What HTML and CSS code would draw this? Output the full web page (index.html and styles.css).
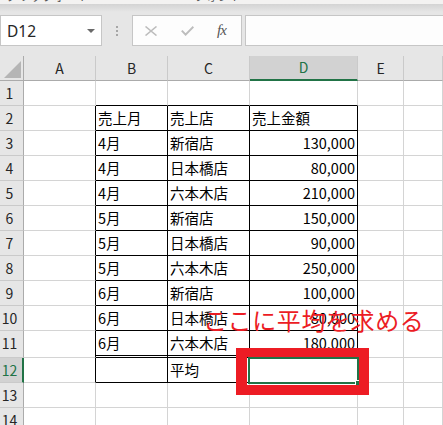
FILE: index.html
```html
<!DOCTYPE html>
<html lang="ja">
<head>
<meta charset="utf-8">
<title>Excel</title>
<link rel="stylesheet" href="styles.css">
</head>
<body>
<div class="screen">
  <div class="ribbon"><span class="rl rl1">クリップボード</span><span class="rl rl2">フォント</span></div>
  <div class="fbar">
    <div class="namebox"><span class="nb-text">D12</span><span class="nb-arrow"></span></div>
    <div class="grip"><i></i><i></i><i></i></div>
    <div class="fbtns">
      <svg class="ic-x" width="12" height="10" viewBox="0 0 12 10"><path d="M0.5 0.5 L11.5 9.5 M11.5 0.5 L0.5 9.5" stroke="#bdbdbd" stroke-width="1.6" fill="none"/></svg>
      <svg class="ic-ok" width="13" height="10" viewBox="0 0 13 10"><path d="M0.8 4.6 L4.6 8.6 L12.4 0.8" stroke="#bdbdbd" stroke-width="2" fill="none"/></svg>
      <span class="fx">fx</span>
    </div>
    <div class="finput"></div>
  </div>
  <div class="sheet">
    <div class="corner"><svg width="17" height="17" viewBox="0 0 17 17"><polygon points="17,0 17,17 0,17" fill="#b5b5b5"/></svg></div>
    <div class="h">A</div><div class="h">B</div><div class="h">C</div><div class="h sel">D</div><div class="h">E</div><div class="h"></div>

    <div class="rh">1</div><div class="c"></div><div class="c bb"></div><div class="c bb"></div><div class="c bb"></div><div class="c"></div><div class="c"></div>

    <div class="rh">2</div><div class="c br"></div><div class="c t">売上月</div><div class="c t">売上店</div><div class="c t">売上金額</div><div class="c"></div><div class="c"></div>

    <div class="rh">3</div><div class="c br"></div><div class="c t">4月</div><div class="c t">新宿店</div><div class="c t num">130,000</div><div class="c"></div><div class="c"></div>

    <div class="rh">4</div><div class="c br"></div><div class="c t">4月</div><div class="c t">日本橋店</div><div class="c t num">80,000</div><div class="c"></div><div class="c"></div>

    <div class="rh">5</div><div class="c br"></div><div class="c t">4月</div><div class="c t">六本木店</div><div class="c t num">210,000</div><div class="c"></div><div class="c"></div>

    <div class="rh">6</div><div class="c br"></div><div class="c t">5月</div><div class="c t">新宿店</div><div class="c t num">150,000</div><div class="c"></div><div class="c"></div>

    <div class="rh">7</div><div class="c br"></div><div class="c t">5月</div><div class="c t">日本橋店</div><div class="c t num">90,000</div><div class="c"></div><div class="c"></div>

    <div class="rh">8</div><div class="c br"></div><div class="c t">5月</div><div class="c t">六本木店</div><div class="c t num">250,000</div><div class="c"></div><div class="c"></div>

    <div class="rh">9</div><div class="c br"></div><div class="c t">6月</div><div class="c t">新宿店</div><div class="c t num">100,000</div><div class="c"></div><div class="c"></div>

    <div class="rh">10</div><div class="c br"></div><div class="c t">6月</div><div class="c t">日本橋店</div><div class="c t num">80,000</div><div class="c"></div><div class="c"></div>

    <div class="rh">11</div><div class="c br"></div><div class="c t dbl">6月</div><div class="c t dbl">六本木店</div><div class="c t dbl num">180,000</div><div class="c"></div><div class="c"></div>

    <div class="rh sel">12</div><div class="c br"></div><div class="c t"></div><div class="c t">平均</div><div class="c t active"><div class="selbox"><span class="handle"></span></div></div><div class="c"></div><div class="c"></div>

    <div class="rh">13</div><div class="c"></div><div class="c"></div><div class="c"></div><div class="c"></div><div class="c"></div><div class="c"></div>

    <div class="rh">14</div><div class="c"></div><div class="c"></div><div class="c"></div><div class="c"></div><div class="c"></div><div class="c"></div>
  </div>
  <div class="callout">ここに平均を求める</div>
  <div class="redbox"></div>
</div>
</body>
</html>
```

FILE: styles.css
```css
* { box-sizing: border-box; }
html, body { margin: 0; padding: 0; background: #fff; }
body { font-family: "Noto Sans CJK JP", "Noto Sans", sans-serif; }

.screen {
  width: 443px;
  height: 425px;
  overflow: hidden;
  position: relative;
  background: #fff;
}

/* ribbon remnant */
.ribbon {
  height: 4px;
  background: #f3f2f1;
  overflow: hidden;
  display: flex;
  color: #555;
  font-size: 12px;
  line-height: 12px;
}
.rl { margin-top: -10px; white-space: nowrap; }
.rl1 { margin-left: 6px; width: 188px; }

/* formula bar */
.fbar {
  height: 52px;
  background: linear-gradient(#d3d3d3, #e6e6e6 8px);
  display: flex;
  align-items: flex-start;
  padding-top: 11px;
}
.namebox {
  width: 102px;
  height: 31px;
  background: #fff;
  border: 1px solid #c6c6c6;
  display: flex;
  align-items: center;
  justify-content: space-between;
  padding: 0 6px 0 6px;
}
.nb-text {
  font-family: "Noto Sans", sans-serif;
  font-size: 15.5px;
  color: #262626;
}
.nb-arrow {
  width: 0;
  height: 0;
  border-left: 4px solid transparent;
  border-right: 4px solid transparent;
  border-top: 4px solid #6a6a6a;
}
.grip {
  width: 30px;
  height: 31px;
  display: flex;
  flex-direction: column;
  align-items: center;
  justify-content: center;
  gap: 2px;
}
.grip i {
  display: block;
  width: 2px;
  height: 2px;
  background: #a6a6a6;
}
.fbtns {
  width: 110px;
  height: 31px;
  background: #fdfdfd;
  border: 1px solid #c6c6c6;
  display: flex;
  align-items: center;
}
.ic-x { margin-left: 12px; display: block; }
.ic-ok { margin-left: 24px; display: block; }
.fx {
  margin-left: 23px;
  font-family: "Liberation Serif", serif;
  font-style: italic;
  font-size: 15px;
  color: #555;
  letter-spacing: -1px;
}
.finput {
  flex: 1;
  height: 31px;
  margin-left: 3px;
  background: #fdfdfd;
  border: 1px solid #c6c6c6;
  border-right: none;
}

/* sheet grid */
.sheet {
  display: grid;
  grid-template-columns: 24px 72px 72px 82px 108px 46px 1fr;
  grid-template-rows: repeat(11, 25px) 27px 25px 25px 25px;
  font-size: 14.5px;
}
.corner {
  background: #e6e6e6;
  border-right: 1px solid #ababab;
  border-bottom: 1px solid #ababab;
  display: flex;
  justify-content: flex-end;
  align-items: flex-end;
  padding: 0 2px 2px 0;
}
.corner svg { display: block; }
.h {
  background: #e6e6e6;
  border-right: 1px solid #cacaca;
  border-bottom: 1px solid #ababab;
  text-align: center;
  line-height: 24px;
  font-size: 14px;
  color: #262626;
}
.h.sel {
  background: #d2d2d2;
  border-bottom: 2px solid #217346;
  color: #217346;
  line-height: 23px;
}
.rh {
  background: #e6e6e6;
  border-right: 1px solid #ababab;
  border-bottom: 1px solid #cacaca;
  text-align: center;
  padding-right: 4px;
  font-size: 14px;
  line-height: 24px;
  color: #262626;
}
.rh.sel {
  background: #d2d2d2;
  border-right: 2px solid #217346;
  padding-right: 3px;
  color: #217346;
}
.c {
  border-right: 1px solid #d4d4d4;
  border-bottom: 1px solid #d4d4d4;
  padding: 0 2px 0 2px;
  line-height: 24px;
  color: #000;
  white-space: nowrap;
}
.c.t { border-right-color: #000; border-bottom-color: #000; }
.c.dbl { border-bottom: 3px double #000; }
.c.bb { border-bottom-color: #000; }
.c.br { border-right-color: #000; }
.c.num { text-align: right; padding-right: 2px; }
.c.active { position: relative; }
.selbox {
  position: absolute;
  left: -2px;
  top: -1px;
  right: -2px;
  bottom: -2px;
  border: 2px solid #217346;
}
.handle {
  position: absolute;
  right: -5px;
  bottom: -5px;
  width: 7px;
  height: 7px;
  background: #217346;
  border: 1px solid #fff;
}

/* annotations */
.callout {
  position: absolute;
  left: 203px;
  top: 308px;
  font-family: "Noto Sans CJK JP", sans-serif;
  font-size: 24px;
  line-height: 24px;
  letter-spacing: 0.6px;
  color: #ec1c24;
  white-space: nowrap;
}
.redbox {
  position: absolute;
  left: 236px;
  top: 348px;
  width: 133px;
  height: 47px;
  border-style: solid;
  border-color: #ed1c24;
  border-width: 9px 10px 10px 11px;
}
```
